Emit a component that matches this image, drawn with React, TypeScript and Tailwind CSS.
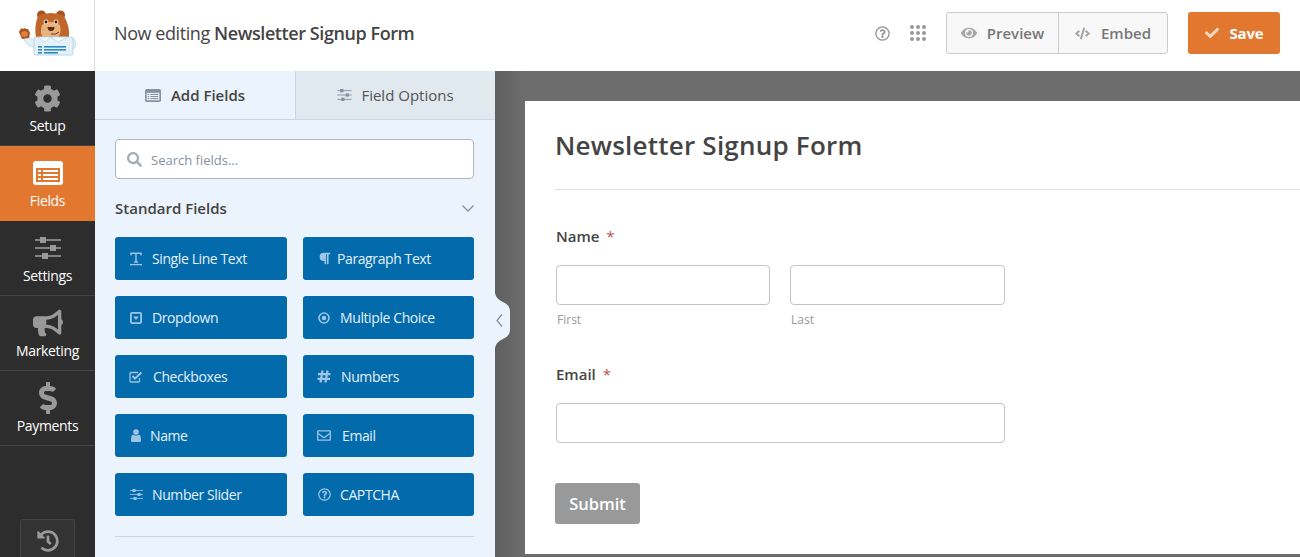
import type { ReactNode } from 'react';
import {
  FaBullhorn,
  FaCheck,
  FaCode,
  FaCog,
  FaDollarSign,
  FaEye,
  FaHistory,
  FaParagraph,
  FaRegEnvelope,
  FaRegQuestionCircle,
  FaSearch,
} from 'react-icons/fa';

const BearLogo = () => (
  <svg viewBox="18 10 60 48" className="h-[48px] w-[60px]">
    {/* ears */}
    <circle cx="41.5" cy="15" r="4.5" fill="#a8521f" />
    <circle cx="60.5" cy="15" r="4.5" fill="#a8521f" />
    {/* arms */}
    <path d="M23 36 C25 44 30 47 35 47 L35 40 C31 40 29 38 28 35 Z" fill="#e4f1f8" stroke="#a9cfe0" strokeWidth="0.7" />
    <path d="M72 38 C77 40 77 47 72 50 Z" fill="#e4f1f8" stroke="#a9cfe0" strokeWidth="0.7" />
    <path d="M19 32 L20 30 L21 29 L22 28 L23 29 L25 28 L26 29 L28 29 L30 33 L29 38 L22 39 Z" fill="#a8521f" />
    <ellipse cx="24.5" cy="34" rx="3.4" ry="3" fill="#d9823f" />
    {/* head */}
    <path d="M38 16 Q51 10 64 16 Q70 26 69 38 L36 38 Q34 26 38 16 Z" fill="#c1662a" />
    <path d="M42 25 Q51 19 60 25 Q62 34 57 38 L44 38 Q39 34 42 25 Z" fill="#eab37d" />
    {/* face */}
    <circle cx="46" cy="22" r="2.5" fill="#f6dcc0" />
    <circle cx="56" cy="22" r="2.5" fill="#f6dcc0" />
    <circle cx="46" cy="22" r="1.4" fill="#33190c" />
    <circle cx="56" cy="22" r="1.4" fill="#33190c" />
    <path d="M47.5 27 H54.5 Q54.5 31 51 31 Q47.5 31 47.5 27 Z" fill="#5a2c13" />
    <path d="M51 34 Q56 35 59 32" fill="none" stroke="#5a2c13" strokeWidth="0.9" />
    {/* shirt */}
    <rect x="34" y="37" width="39" height="18" rx="1.5" fill="#e4f1f8" stroke="#a9cfe0" strokeWidth="0.8" />
    <path d="M38 37 L51 37 L45 42 Z M51 37 L68 37 L58 42 Z" fill="#f6fbfd" stroke="#a9cfe0" strokeWidth="0.6" />
    {/* form rows */}
    <g fill="#2b8cc4">
      <rect x="38" y="46" width="4" height="1.6" />
      <rect x="44" y="46" width="22" height="1.6" />
      <rect x="38" y="49" width="4" height="1.6" />
      <rect x="44" y="49" width="22" height="1.6" />
      <rect x="38" y="52" width="4" height="1.6" />
      <rect x="44" y="52" width="14" height="1.6" />
    </g>
  </svg>
);

const ListIcon = ({ bg, fg, className }: { bg: string; fg: string; className: string }) => (
  <svg viewBox="0 0 30 24" className={className}>
    <rect width="30" height="24" rx="3" fill={bg} />
    <rect x="3" y="7" width="24" height="14" fill={fg} />
    <g fill={bg}>
      <rect x="5" y="9" width="3" height="2" />
      <rect x="10" y="9" width="15" height="2" />
      <rect x="5" y="13" width="3" height="2" />
      <rect x="10" y="13" width="15" height="2" />
      <rect x="5" y="17" width="3" height="2" />
      <rect x="10" y="17" width="15" height="2" />
    </g>
  </svg>
);

const SlidersIcon = ({ color, className }: { color: string; className: string }) => (
  <svg viewBox="0 0 26 22" className={className} fill={color}>
    <rect y="2.2" width="26" height="1.6" />
    <rect y="10.2" width="26" height="1.6" />
    <rect y="18.2" width="26" height="1.6" />
    <rect x="5" y="0" width="6" height="6" />
    <rect x="15" y="8" width="6" height="6" />
    <rect x="7" y="16" width="6" height="6" />
  </svg>
);

const TextIcon = () => (
  <svg viewBox="0 0 14 14" className="h-[14px] w-[14px]" fill="none" stroke="#9cc5e6" strokeWidth="1.4">
    <path d="M2 3.5 V1.2 H12 V3.5 M7 1.2 V10 M5 10 H9" />
    <path d="M1 12.6 H13" />
  </svg>
);

const DropdownIcon = () => (
  <svg viewBox="0 0 12 12" className="h-[12px] w-[12px]">
    <rect x="0.9" y="0.9" width="10.2" height="10.2" rx="1.2" fill="none" stroke="#9cc5e6" strokeWidth="1.8" />
    <path d="M3.2 4.4 H8.8 L6 8 Z" fill="#9cc5e6" />
  </svg>
);

const RadioIcon = () => (
  <svg viewBox="0 0 12 12" className="h-[12px] w-[12px]">
    <circle cx="6" cy="6" r="5" fill="none" stroke="#9cc5e6" strokeWidth="1.6" />
    <circle cx="6" cy="6" r="2.3" fill="#9cc5e6" />
  </svg>
);

const CheckboxIcon = () => (
  <svg viewBox="0 0 14 12" className="h-[12px] w-[14px]" fill="none" stroke="#9cc5e6">
    <path d="M10.5 7 V10 Q10.5 11 9.5 11 H2 Q1 11 1 10 V2.5 Q1 1.5 2 1.5 H9" strokeWidth="1.3" />
    <path d="M3.5 5 L6 7.6 L12.4 1.6" strokeWidth="2" />
  </svg>
);

const HashIcon = () => (
  <svg viewBox="0 0 14 13" className="h-[13px] w-[14px]" fill="none" stroke="#9cc5e6" strokeWidth="2.2">
    <path d="M5.5 0.5 L3.5 12.5 M10.5 0.5 L8.5 12.5 M1 4.2 H13.5 M0.5 8.8 H13" />
  </svg>
);

const UserIcon = () => (
  <svg viewBox="0 0 10 13" className="h-[13px] w-[10px]" fill="#9cc5e6">
    <circle cx="5" cy="3" r="2.8" />
    <path d="M1.8 5.4 Q5 7.4 8.2 5.4 Q10 6.5 10 11.5 Q10 13 8.5 13 H1.5 Q0 13 0 11.5 Q0 6.5 1.8 5.4 Z" />
  </svg>
);

const NavItem = ({ icon, label, active }: { icon: ReactNode; label: string; active?: boolean }) => (
  <div
    className={`flex h-[75px] shrink-0 flex-col items-center pt-[11px] text-[14px] leading-[20px] tracking-[-0.35px] text-white ${
      active ? 'bg-[#e27730]' : 'border-b border-[#444444]'
    }`}
  >
    <div className="flex h-[32px] items-center justify-center text-[#999999]">{icon}</div>
    <span className="mt-[2px]">{label}</span>
  </div>
);

const FieldButton = ({ icon, label, gap }: { icon: ReactNode; label: string; gap: string }) => (
  <div
    className={`flex h-[43px] items-center rounded-[3px] bg-[#036aab] pl-[14px] text-[14px] tracking-[-0.4px] text-[#e4f1fb] ${gap}`}
  >
    <span className="flex w-[14px] shrink-0 justify-center text-[13px] text-[#9cc5e6]">{icon}</span>
    <span>{label}</span>
  </div>
);

const TextInput = ({ className }: { className: string }) => (
  <div className={`h-[40px] rounded-[4px] border border-[#c4c4c4] bg-white ${className}`} />
);

const Required = () => <span className="ml-[3px] font-normal text-[#b5524f]">*</span>;

export default function App() {
  return (
    <div className="flex h-[557px] w-[1300px] flex-col overflow-hidden bg-white font-['Open_Sans','Noto_Sans',sans-serif] text-[#444444]">
      <header className="flex h-[71px] shrink-0">
        <div className="flex h-full w-[95px] shrink-0 border-r border-[#dddddd] pl-[18px] pt-[10px]">
          <BearLogo />
        </div>
        <div className="flex flex-1 items-center pb-[5px]">
          <div className="ml-[19px] text-[18px] tracking-[-0.42px] text-[#444444]">
            Now editing <span className="font-semibold">Newsletter Signup Form</span>
          </div>
          <div className="ml-auto mr-[20px] flex items-center">
            <FaRegQuestionCircle className="mr-[20px] text-[15px] text-[#999999]" />
            <div className="mr-[20px] grid grid-cols-3 gap-[2px]">
              {[...Array(9)].map((_, i) => (
                <span key={i} className="h-[4px] w-[4px] rounded-full bg-[#999999]" />
              ))}
            </div>
            <div className="mr-[20px] flex h-[42px] rounded-[3px] border border-[#cccccc] bg-[#f8f8f8] text-[15px] font-semibold text-[#777777]">
              <div className="flex w-[112px] items-center justify-center gap-[10px] border-r border-[#cccccc]">
                <FaEye className="text-[16px] text-[#a6a6a6]" />
                Preview
              </div>
              <div className="flex w-[108px] items-center justify-center gap-[11px]">
                <FaCode className="text-[15px] text-[#a6a6a6]" />
                Embed
              </div>
            </div>
            <div className="flex h-[42px] w-[92px] items-center justify-center gap-[11px] rounded-[3px] bg-[#e27730] text-[15px] font-bold tracking-[-0.2px] text-white">
              <FaCheck className="text-[14px] text-[#f6dcc8]" />
              Save
            </div>
          </div>
        </div>
      </header>

      <div className="flex min-h-0 flex-1">
        <nav className="flex w-[95px] shrink-0 flex-col bg-[#2d2d2d]">
          <NavItem icon={<FaCog className="text-[27px]" />} label="Setup" />
          <NavItem icon={<ListIcon bg="#ffffff" fg="#e27730" className="h-[24px] w-[30px]" />} label="Fields" active />
          <NavItem icon={<SlidersIcon color="#999999" className="h-[22px] w-[26px]" />} label="Settings" />
          <NavItem icon={<FaBullhorn className="text-[30px]" />} label="Marketing" />
          <NavItem icon={<FaDollarSign className="text-[32px]" />} label="Payments" />
          <div className="mx-auto mt-[73px] flex h-[40px] w-[55px] shrink-0 justify-center rounded-t-[3px] border border-[#444444] bg-[#333333] pt-[10px]">
            <FaHistory className="text-[22px] text-[#999999]" />
          </div>
        </nav>

        <aside className="relative z-10 w-[400px] shrink-0 bg-[#ebf3fc]">
          <div className="flex h-[49px] border-b border-[#ced7e0] text-[15px]">
            <div className="flex w-[200px] items-center justify-center gap-[10px] font-semibold text-[#444444]">
              <ListIcon bg="#86919e" fg="#ebf3fc" className="h-[13px] w-[16px]" />
              Add Fields
            </div>
            <div className="flex flex-1 items-center justify-center gap-[9px] border-l border-[#ced7e0] bg-[#e0e8f0] text-[#555555]">
              <SlidersIcon color="#86919e" className="h-[12px] w-[15px]" />
              Field Options
            </div>
          </div>

          <div className="pl-[20px] pr-[21px] pt-[19px]">
            <div className="flex h-[40px] items-center gap-[9px] rounded-[4px] border border-[#b0b6bd] bg-white pl-[11px] text-[13px] text-[#86919e]">
              <FaSearch className="text-[15px] text-[#a6adb5]" />
              <span className="pt-[3px]">Search fields...</span>
            </div>
            <div className="mt-[19px] flex h-[20px] items-center justify-between text-[15px] font-semibold text-[#444444]">
              Standard Fields
              <svg viewBox="0 0 12 7" className="h-[7px] w-[12px]" fill="none" stroke="#86919e" strokeWidth="1.3">
                <path d="M0.5 0.5 L6 6 L11.5 0.5" />
              </svg>
            </div>
            <div className="mt-[19px] grid grid-cols-[172px_171px] gap-x-[16px] gap-y-[16px]">
              <FieldButton icon={<TextIcon />} label="Single Line Text" gap="gap-[9px]" />
              <FieldButton icon={<FaParagraph className="text-[13px]" />} label="Paragraph Text" gap="gap-[6px]" />
              <FieldButton icon={<DropdownIcon />} label="Dropdown" gap="gap-[9px]" />
              <FieldButton icon={<RadioIcon />} label="Multiple Choice" gap="gap-[9px]" />
              <FieldButton icon={<CheckboxIcon />} label="Checkboxes" gap="gap-[10px]" />
              <FieldButton icon={<HashIcon />} label="Numbers" gap="gap-[10px]" />
              <FieldButton icon={<UserIcon />} label="Name" gap="gap-[7px]" />
              <FieldButton icon={<FaRegEnvelope className="text-[15px]" />} label="Email" gap="gap-[11px]" />
              <FieldButton icon={<SlidersIcon color="#9cc5e6" className="h-[11px] w-[13px]" />} label="Number Slider" gap="gap-[9px]" />
              <FieldButton icon={<FaRegQuestionCircle />} label="CAPTCHA" gap="gap-[9px]" />
            </div>
            <div className="mt-[20px] border-t border-[#ced7e0]" />
          </div>

          {/* collapse handle */}
          <svg viewBox="0 0 15 55" className="absolute left-full top-[222px] h-[55px] w-[15px]">
            <path d="M0 0 Q1 6 8 9 Q15 12 15 18 V37 Q15 43 8 46 Q1 49 0 55 Z" fill="#ebf3fc" />
            <path d="M7 21.5 L2 27.5 L7 33.5" fill="none" stroke="#86919e" strokeWidth="1.3" />
          </svg>
        </aside>

        <main className="min-w-0 flex-1 bg-[linear-gradient(to_right,#5f5f5f,#6d6d6d_30px)] pl-[30px] pt-[30px]">
          <div className="h-[453px] bg-white pl-[30px] pt-[26px]">
            <h1 className="h-[63px] border-b border-[#dddddd] text-[26px] font-semibold leading-[36px] tracking-[0.22px] text-[#444444]">
              Newsletter Signup Form
            </h1>
            <div className="pl-[1px] pt-[36px]">
              <div className="text-[15px] font-semibold leading-[20px]">
                Name <Required />
              </div>
              <div className="mt-[19px] flex gap-[20px]">
                <div>
                  <TextInput className="w-[214px]" />
                  <div className="ml-[1px] mt-[7px] text-[12px] leading-[16px] text-[#999999]">First</div>
                </div>
                <div>
                  <TextInput className="w-[215px]" />
                  <div className="ml-[1px] mt-[7px] text-[12px] leading-[16px] text-[#999999]">Last</div>
                </div>
              </div>
              <div className="mt-[36px] text-[15px] font-semibold leading-[20px]">
                Email <Required />
              </div>
              <TextInput className="mt-[19px] w-[449px]" />
              <div className="-ml-[1px] mt-[40px] flex h-[41px] w-[85px] items-center justify-center rounded-[3px] bg-[#999999] pt-[1px] text-[16.5px] font-semibold text-white">
                Submit
              </div>
            </div>
          </div>
        </main>
      </div>
    </div>
  );
}
